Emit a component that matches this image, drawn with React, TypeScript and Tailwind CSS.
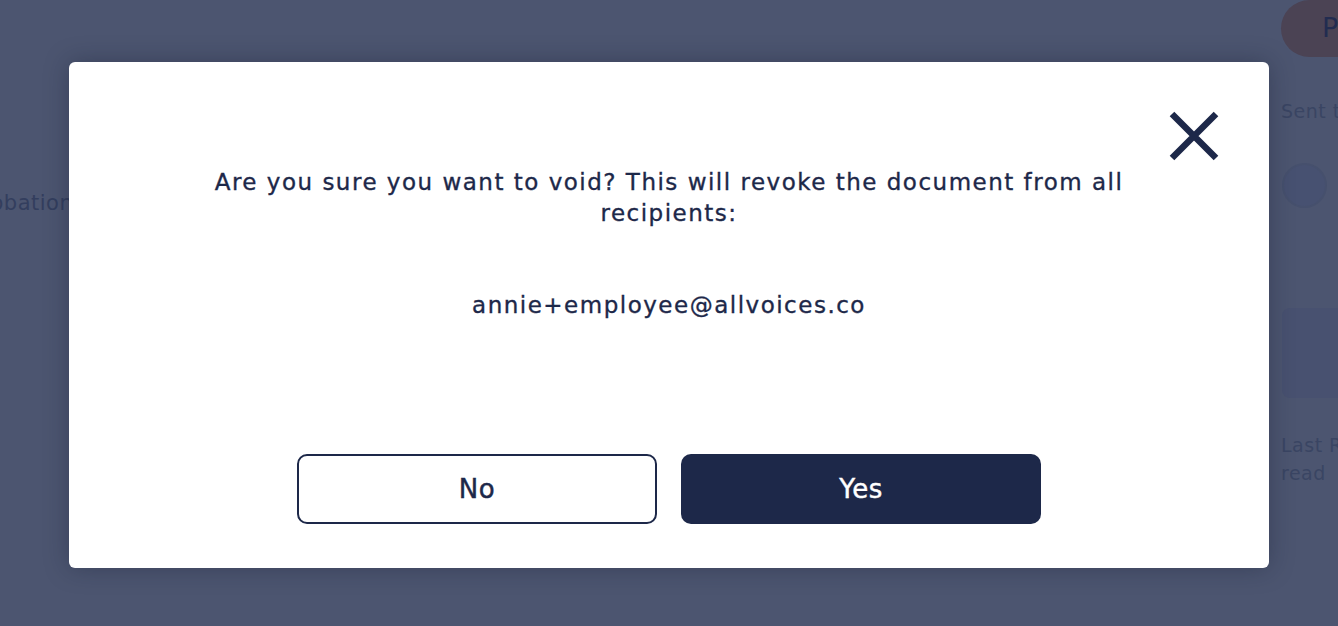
import React from 'react';

const navy = '#1d2849';

const CloseIcon: React.FC = () => (
  <svg width="50" height="50" viewBox="0 0 50 50" fill="none">
    <path d="M3 3 L47 47 M47 3 L3 47" stroke={navy} strokeWidth="6.5" strokeLinecap="butt" />
  </svg>
);

const App: React.FC = () => {
  return (
    <div
      className="relative h-[626px] w-full overflow-hidden bg-[#4c5570]"
      style={{ fontFamily: '"DejaVu Sans", "Open Sans", sans-serif' }}
    >
      {/* Page behind the overlay */}
      <div className="flex h-full">
        <div className="flex-1 overflow-hidden pt-[188px]">
          <span className="-ml-[31px] block text-[21px] tracking-[0.5px] text-[#333e5e]">Probation</span>
        </div>
        <div className="flex w-[57px] flex-col">
          <div className="flex h-[57px] w-[80px] items-center rounded-l-full bg-[#4b4354] pl-[41px] text-[27px] text-[#222c50]">
            P
          </div>
          <div className="mt-[40px] whitespace-nowrap text-[19px] tracking-[0.5px] text-[#3a4563]">Sent t</div>
          <div className="mt-[37px] ml-px h-[45px] w-[45px] rounded-full border-2 border-[#46506d] bg-[#475171]" />
          <div className="mt-[100px] ml-px h-[90px] w-[80px] rounded-l-lg bg-[#485170]" />
          <div className="mt-[33px] whitespace-nowrap text-[19px] leading-[28px] tracking-[0.5px] text-[#3a4563]">
            Last R
            <br />
            read
          </div>
        </div>
      </div>

      {/* Modal */}
      <div className="absolute left-[69px] top-[62px] flex h-[506px] w-[1200px] flex-col items-center rounded-md bg-white pt-[105px] shadow-[0_0_24px_rgba(20,25,45,0.35)]">
        <button className="absolute right-[50px] top-[49px]" aria-label="Close">
          <CloseIcon />
        </button>
        <p className="w-[1000px] text-center text-[23px] leading-[31px] tracking-[1.5px] text-[#1d2849] [-webkit-text-stroke:0.35px_#1d2849]">
          Are you sure you want to void? This will revoke the document from all recipients:
        </p>
        <p className="mt-[61px] text-[23px] leading-[31px] tracking-[1.5px] text-[#1d2849] [-webkit-text-stroke:0.35px_#1d2849]">
          annie+employee@allvoices.co
        </p>
        <div className="mt-[133px] flex gap-[24px]">
          <button className="flex h-[70px] w-[360px] items-center justify-center rounded-[10px] border-2 border-[#1d2849] bg-white text-[26px] tracking-[0.5px] text-[#1d2849] [-webkit-text-stroke:0.45px_#1d2849]">
            No
          </button>
          <button className="flex h-[70px] w-[360px] items-center justify-center rounded-[10px] bg-[#1d2849] text-[26px] tracking-[0.5px] text-white [-webkit-text-stroke:0.45px_#ffffff]">
            Yes
          </button>
        </div>
      </div>
    </div>
  );
};

export default App;
